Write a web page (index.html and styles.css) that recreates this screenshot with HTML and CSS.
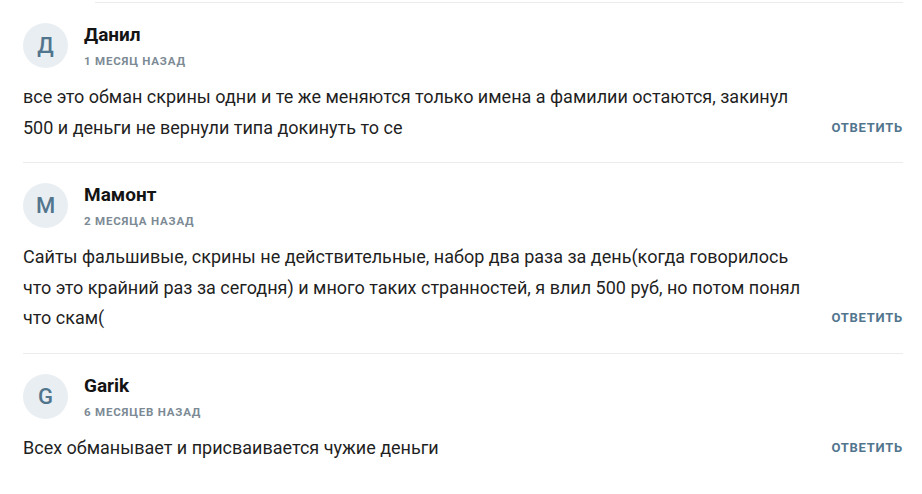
FILE: index.html
```html
<!DOCTYPE html>
<html lang="ru">
<head>
<meta charset="utf-8">
<title>Комментарии</title>
<link rel="stylesheet" href="styles.css">
</head>
<body>
<div class="comments">
  <div class="top-rule"></div>

  <div class="comment">
    <div class="head">
      <div class="avatar">Д</div>
      <div class="meta">
        <div class="name">Данил</div>
        <div class="date">1 месяц назад</div>
      </div>
    </div>
    <div class="body">
      <p class="text">все это обман скрины одни и те же меняются только имена а фамилии остаются, закинул 500 и деньги не вернули типа докинуть то се</p>
      <a class="reply" href="#">Ответить</a>
    </div>
  </div>

  <div class="comment">
    <div class="head">
      <div class="avatar">M</div>
      <div class="meta">
        <div class="name">Мамонт</div>
        <div class="date">2 месяца назад</div>
      </div>
    </div>
    <div class="body">
      <p class="text">Сайты фальшивые, скрины не действительные, набор два раза за день(когда говорилось что это крайний раз за сегодня) и много таких странностей, я влил 500 руб, но потом понял что скам(</p>
      <a class="reply" href="#">Ответить</a>
    </div>
  </div>

  <div class="comment last">
    <div class="head">
      <div class="avatar">G</div>
      <div class="meta">
        <div class="name">Garik</div>
        <div class="date">6 месяцев назад</div>
      </div>
    </div>
    <div class="body">
      <p class="text">Всех обманывает и присваивается чужие деньги</p>
      <a class="reply" href="#">Ответить</a>
    </div>
  </div>
</div>
</body>
</html>
```

FILE: styles.css
```css
* { box-sizing: border-box; }

html, body {
  margin: 0;
  padding: 0;
  background: #ffffff;
}

body {
  font-family: Roboto, "Liberation Sans", Arial, sans-serif;
  color: #1f1f1f;
}

.comments {
  padding: 2px 19px 0 23px;
}

.top-rule {
  height: 1px;
  background: #ececec;
  margin-left: 72px;
}

.comment {
  padding: 20px 0 19px;
  border-bottom: 1px solid #ececec;
}

.comment.last {
  border-bottom: none;
}

.head {
  display: flex;
  align-items: flex-start;
  gap: 16px;
}

.avatar {
  width: 45px;
  height: 45px;
  border-radius: 50%;
  background: #e9eef2;
  color: #52758e;
  font-size: 22px;
  font-weight: 500;
  display: flex;
  align-items: center;
  justify-content: center;
  flex: 0 0 auto;
}

.meta {
  display: flex;
  flex-direction: column;
  padding-top: 1px;
}

.name {
  font-size: 19px;
  line-height: 22px;
  font-weight: 700;
  color: #141414;
  margin-bottom: 8px;
}

.date {
  font-size: 11.5px;
  line-height: 14px;
  font-weight: 700;
  color: #7c8a95;
  text-transform: uppercase;
  letter-spacing: 0.8px;
}

.body {
  display: flex;
  align-items: flex-end;
  justify-content: space-between;
  margin-top: 14px;
}

.text {
  margin: 0;
  max-width: 785px;
  font-size: 18px;
  line-height: 30.5px;
  color: #1f1f1f;
}

.reply {
  font-size: 13px;
  line-height: 30.5px;
  font-weight: 700;
  color: #52758e;
  text-transform: uppercase;
  letter-spacing: 0.75px;
  text-decoration: none;
  flex: 0 0 auto;
}
```
